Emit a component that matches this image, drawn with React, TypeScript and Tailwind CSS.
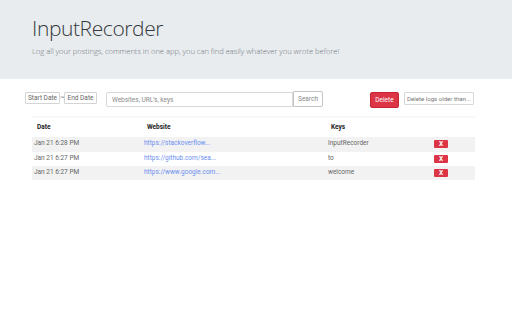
import React from "react";

const rows = [
  { date: "Jan 21 6:28 PM", url: "https://stackoverflow...", keys: "InputRecorder" },
  { date: "Jan 21 6:27 PM", url: "https://github.com/sea...", keys: "to" },
  { date: "Jan 21 6:27 PM", url: "https://www.google.com...", keys: "welcome" },
];

export default function App() {
  return (
    <div className="w-[512px] h-[320px] bg-white font-['Roboto','Liberation_Sans',sans-serif] overflow-hidden">
      <div className="h-[79px] bg-[#e9ecef] pl-[32px] pt-[15px]">
        <h1 className="text-[21px] leading-[27px] font-light text-[#343a40] font-['Open_Sans','Lato',sans-serif] tracking-[-0.4px]">
          InputRecorder
        </h1>
        <p className="mt-[4px] text-[7.55px] leading-[10px] font-light text-[#6c757d] font-['Open_Sans','Lato',sans-serif]">
          Log all your postings, comments in one app, you can find easily whatever you wrote before!
        </p>
      </div>

      <div className="flex items-start pl-[25px] mt-[13px] text-[6.5px] text-[#666]">
        <button className="w-[35px] h-[12px] border border-[#d4d4d4] rounded-[1px] bg-white leading-none">
          Start Date
        </button>
        <span className="w-[4px] text-center leading-[10px]">~</span>
        <button className="w-[33px] h-[12px] border border-[#d4d4d4] rounded-[1px] bg-white leading-none">
          End Date
        </button>
        <div className="ml-[9px] flex">
          <input
            className="w-[187px] h-[15px] border border-[#d8d8d8] rounded-l-[2px] px-[5px] text-[6.5px] outline-none placeholder:text-[#8a8a8a]"
            placeholder="Websites, URL's, keys"
          />
          <button className="w-[30px] h-[16px] -mt-[1px] border border-[#c4c4c4] rounded-r-[2px] bg-white text-[#888] leading-none">
            Search
          </button>
        </div>
        <button className="ml-[47px] w-[29px] h-[16px] bg-[#dc3545] border border-[#c82333] rounded-[2px] text-white leading-none">
          Delete
        </button>
        <input
          className="ml-[5px] w-[70px] h-[13px] border border-[#d8d8d8] rounded-[1px] px-[2px] text-[6.1px] outline-none placeholder:text-[#777]"
          placeholder="Delete logs older than..."
        />
      </div>

      <div className="ml-[32px] w-[443px] mt-[8px] text-[6.5px]">
        <div className="h-[2px] bg-[#f8f8f8]" />
        <div className="grid grid-cols-[110px_184px_104px_45px] h-[19px] items-center font-bold text-[#222]">
          <div className="pl-[5px]">Date</div>
          <div className="pl-[5px]">Website</div>
          <div className="pl-[5px]">Keys</div>
          <div />
        </div>
        {rows.map((r, i) => (
          <div
            key={i}
            className={`grid grid-cols-[110px_184px_104px_45px] items-center ${
              i === 1 ? "h-[14px] bg-white" : "h-[14.5px] bg-[#f2f2f2]"
            }`}
          >
            <div className="pl-[2px] text-[#666]">{r.date}</div>
            <div className="pl-[2px] text-[#6b8ff0]">{r.url}</div>
            <div className="pl-[2px] text-[#666]">{r.keys}</div>
            <div className="pl-[4px] flex items-center">
              <span className="w-[14px] h-[8px] bg-[#dc3545] rounded-[1px] text-white text-[6.5px] font-bold leading-[8px] text-center">
                X
              </span>
            </div>
          </div>
        ))}
      </div>
    </div>
  );
}
